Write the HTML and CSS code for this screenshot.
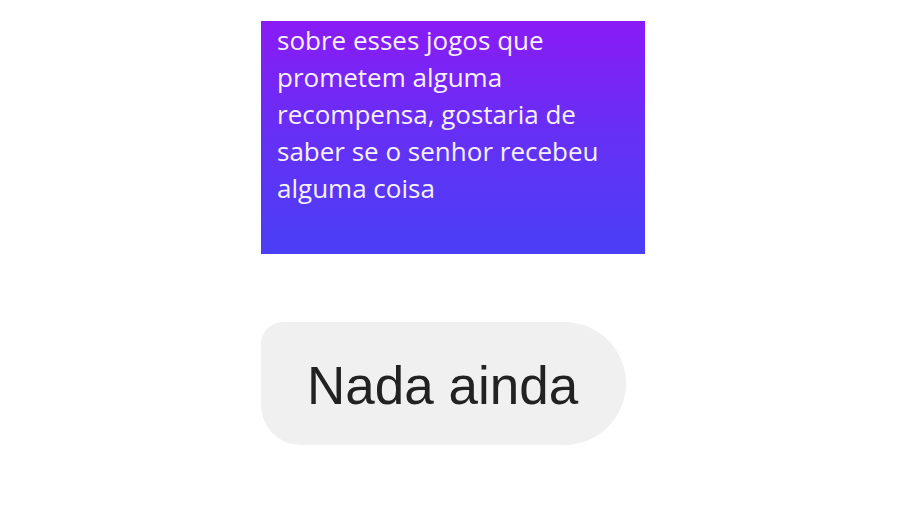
FILE: index.html
```html
<!DOCTYPE html>
<html lang="pt-BR">
<head>
    <meta charset="UTF-8">
    <meta name="viewport" content="width=device-width, initial-scale=1.0">
    <title>Conversa</title>
    <link rel="stylesheet" href="styles.css">
</head>
<body>
    <div class="chat">
        <div class="message sent">
            <p>sobre esses jogos que prometem alguma recompensa, gostaria de saber se o senhor recebeu alguma coisa</p>
        </div>
        <div class="message received">
            <p>Nada ainda</p>
        </div>
    </div>
</body>
</html>
```

FILE: styles.css
```css
body {
    margin: 0;
    padding: 0;
    background-color: #fff;
    font-family: 'Open Sans', 'Noto Sans', sans-serif;
}

.chat {
    width: 384px;
    margin: 0 auto;
    padding-top: 21px;
    display: flex;
    flex-direction: column;
    align-items: flex-start;
    gap: 68px;
}

.message p {
    margin: 0;
}

.sent {
    box-sizing: border-box;
    width: 384px;
    height: 233px;
    padding: 1px 20px 0 16px;
    background: linear-gradient(180deg, #8a1bf6 0%, #6530f5 50%, #4a3ff6 100%);
    color: #f6f0ff;
    font-size: 26px;
    font-weight: 500;
    line-height: 37px;
}

.received {
    box-sizing: border-box;
    width: 365px;
    height: 123px;
    padding-left: 46px;
    padding-top: 4px;
    display: flex;
    align-items: center;
    background-color: #f0f0f0;
    border-radius: 22px 62px 62px 40px;
    color: #222;
    font-family: 'Liberation Sans', Arial, sans-serif;
    font-size: 53px;
}
```
